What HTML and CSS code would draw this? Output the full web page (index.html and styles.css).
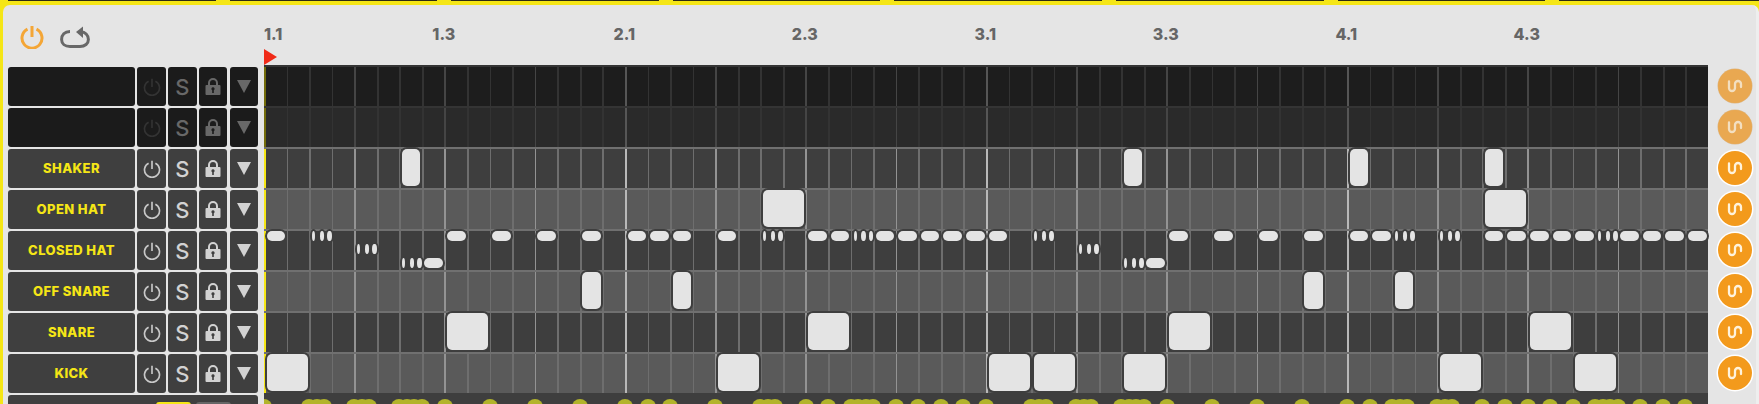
FILE: index.html
```html
<!DOCTYPE html>
<html lang="en">
<head>
    <meta charset="UTF-8">
    <meta name="viewport" content="width=device-width, initial-scale=1.0">
    <title>Sequencer</title>
    <link rel="stylesheet" href="styles.css">
</head>
<body>
    <svg class="defs" width="0" height="0">
        <symbol id="power" viewBox="0 0 24 24">
            <path class="power-path" d="M7.5 4.2a10 10 0 1 0 9 0M12 1v11" fill="none" stroke="currentColor"/>
        </symbol>
        <symbol id="lock" viewBox="0 0 16 17">
            <path d="M4 7V5a4 4 0 0 1 8 0v2" fill="none" stroke="currentColor" stroke-width="2"/>
            <path fill-rule="evenodd" fill="currentColor" d="M1.5 7h13a1 1 0 0 1 1 1v8a1 1 0 0 1-1 1h-13a1 1 0 0 1-1-1V8a1 1 0 0 1 1-1zM8 9.2a1.6 1.6 0 0 0-.8 3V15h1.6v-2.8a1.6 1.6 0 0 0-.8-3z"/>
        </symbol>
        <symbol id="squiggle" viewBox="0 0 18 18">
            <path d="M3 4.5v6.5a3 3 0 0 0 6 0V7a3 3 0 0 1 6 0v3" fill="none" stroke="currentColor" stroke-width="2.3" stroke-linecap="round"/>
        </symbol>
    </svg>

    <div class="tabs">
        <span></span><span></span><span></span><span></span><span></span><span></span><span></span><span></span>
    </div>

    <div class="panel">
        <div class="header">
            <div class="transport">
                <svg class="main-power"><use href="#power"/></svg>
                <svg class="loop" viewBox="0 0 30 22">
                    <path d="M10 5.500C4.500 5.500 1.600 9 1.600 13.500S5 20.500 10 20.500H20C25 20.500 28.400 17.500 28.400 13.500 28.400 9 25 5.800 21 5.800" fill="none" stroke="currentColor" stroke-width="3"/>
                    <path d="M16 6 23 .5V12z" fill="currentColor"/>
                </svg>
            </div>
            <div class="ruler">
                <span class="first">1.1</span><span>1.3</span><span>2.1</span><span>2.3</span><span>3.1</span><span>3.3</span><span>4.1</span><span>4.3</span>
                <i class="marker"></i>
            </div>
        </div>
        <div class="main">
            <div class="tracks" id="tracks"></div>
            <div class="grid">
                <div id="lanes"></div>
                <div class="velocity" id="velocity"></div>
            </div>
            <div class="knobs" id="knobs"></div>
        </div>
    </div>

    <script src="script.js"></script>
</body>
</html>
```

FILE: styles.css
```css
body {
    margin: 0;
    height: 404px;
    overflow: hidden;
    background-color: #f5e616;
    font-family: Inter, "Liberation Sans", sans-serif;
}
.defs {
    position: absolute;
}
.tabs {
    display: flex;
    gap: 14px;
    height: 1px;
    padding-left: 8px;
    margin-bottom: 4px;
}
.tabs span {
    flex: 0 0 207.600px;
    background-color: #2e2c12;
}
.panel {
    margin-left: 3px;
    height: 399px;
    overflow: hidden;
    padding-left: 5px;
    box-sizing: border-box;
    background-color: #e5e5e5;
    border-right: 3px solid #eeeeee;
    border-radius: 7px 7px 0 0;
}

.header {
    display: flex;
    height: 60px;
}
.transport {
    display: flex;
    flex: 0 0 256px;
    align-items: flex-start;
    gap: 16px;
    padding: 20px 0 0 12px;
    box-sizing: border-box;
}
.power-path {
    stroke-width: var(--power-stroke, 2.2);
}
.main-power {
    --power-stroke: 3;
    width: 24px;
    height: 24px;
    color: #f4a636;
}
.loop {
    width: 30px;
    height: 22px;
    margin-top: 1px;
    color: #686868;
}
.ruler {
    position: relative;
    display: grid;
    grid-template-columns: 89.500px repeat(7, 180.500px);
    padding-top: 19px;
    height: 41px;
    font-size: 16px;
    font-weight: 800;
    color: #666666;
    text-align: center;
}
.ruler .first {
    text-align: left;
}
.marker {
    position: absolute;
    left: 0;
    bottom: 0;
    width: 13px;
    height: 16px;
    background-color: #f02a17;
    clip-path: polygon(0 0, 100% 50%, 0 100%);
}

.main {
    display: flex;
}
.tracks {
    flex: 0 0 250px;
    margin: 2px 6px 0 0;
}
.track {
    display: grid;
    grid-template-columns: 127px repeat(4, 28.500px);
    gap: 2.250px;
    height: 39px;
    margin-bottom: 2px;
    color: #d2d2d2;
    --cell: #3f3f3f;
    --off: #c8c8c8;
}
.track.muted {
    color: #686868;
    --cell: #1b1b1b;
    --off: #333333;
}
.track > div {
    display: flex;
    align-items: center;
    justify-content: center;
    background-color: var(--cell);
    border-radius: 3px;
}
.track > .name {
    padding-bottom: 2px;
    box-sizing: border-box;
    font-size: 13px;
    font-weight: 800;
    letter-spacing: 0.4px;
    color: #f5e616;
}
.btn-power {
    width: 18px;
    height: 18px;
    color: var(--off);
}
.btn-solo {
    font-size: 22px;
    font-weight: 500;
}
.btn-lock {
    width: 16px;
    height: 17px;
}
.btn-menu {
    width: 0;
    height: 0;
    border-left: 7.500px solid transparent;
    border-right: 7.500px solid transparent;
    border-top: 13px solid currentColor;
}
.extra {
    display: flex;
    justify-content: flex-end;
    gap: 5px;
    height: 20px;
    padding: 7px 27px 0 0;
    box-sizing: border-box;
    background-color: #3f3f3f;
    border-radius: 3px;
}
.extra span {
    width: 35px;
    background-color: #666666;
    border-radius: 3px;
}
.extra .on {
    background-color: #f5e616;
}

.grid {
    flex: 0 0 1444px;
}
.lane {
    position: relative;
    height: 39px;
    border-top: 2px solid #707070;
    background-color: #3e3e3e;
    background-image:
        linear-gradient(#f5e616, #f5e616),
        repeating-linear-gradient(to right, #b8b8b8 0 1.700px, transparent 1.700px 361px),
        repeating-linear-gradient(to right, #939393 0 1.700px, transparent 1.700px 90.250px),
        repeating-linear-gradient(to right, #6e6e6e 0 1.700px, transparent 1.700px 22.5625px);
    background-size: 2px 100%, auto, auto, auto;
    background-repeat: no-repeat, repeat, repeat, repeat;
}
.lane.light {
    background-color: #5a5a5a;
}
.lane.muted::after {
    content: "";
    position: absolute;
    left: 0;
    right: 0;
    top: -2px;
    bottom: 0;
    background-color: rgba(0, 0, 0, 0.53);
}
.note {
    position: absolute;
    top: 0;
    height: 37px;
    background-color: #e4e4e4;
    border-radius: 5px;
    box-shadow: 0 0 0 2px #3e3e3e;
}
.note.hat {
    height: 9.500px;
    border-radius: 5px;
}
.note.tick {
    height: 10px;
    border-radius: 50%;
}
.velocity {
    position: relative;
    height: 11px;
    overflow: hidden;
    background-color: #3e3e3e;
}
.velocity i {
    position: absolute;
    top: 6px;
    width: 16px;
    height: 16px;
    margin-left: -8px;
    background-color: #b2b42b;
    border-radius: 50%;
}

.knobs {
    display: flex;
    flex-direction: column;
    gap: 7px;
    padding: 4px 0 0 10px;
}
.knob {
    display: flex;
    align-items: center;
    justify-content: center;
    width: 34px;
    height: 34px;
    background-color: #f39a1c;
    border-radius: 50%;
    box-shadow: 0 0 0 1.500px #ffffff;
    color: #fff3dc;
}
.knob.muted {
    background-color: #e9a851;
    box-shadow: 0 0 0 0.500px #dcb98a;
    color: #f3dfc0;
}
.knob svg {
    width: 18px;
    height: 18px;
}
```

FILE: script.js
```js
const COL = 22.5625;

// name, muted, notes as [column, length in columns]
const pistas = [
    { name: '', muted: true, notes: [] },
    { name: '', muted: true, light: true, notes: [] },
    { name: 'SHAKER', notes: [[6, 1], [38, 1], [48, 1], [54, 1]] },
    { name: 'OPEN HAT', light: true, notes: [[22, 2], [54, 2]] },
    { name: 'CLOSED HAT', hats: true, notes: [] },
    { name: 'OFF SNARE', light: true, notes: [[14, 1], [18, 1], [46, 1], [50, 1]] },
    { name: 'SNARE', notes: [[8, 2], [24, 2], [40, 2], [56, 2]] },
    { name: 'KICK', light: true, notes: [[0, 2], [20, 2], [32, 2], [34, 2], [38, 2], [52, 2], [58, 2]] }
];

// closed hat: [column, lane offset]; triplets are kept apart
const hats = [
    [0, 0], [8, 0], [10, 0], [12, 0], [14, 0], [16, 0], [17, 0], [18, 0], [20, 0], [24, 0], [25, 0],
    [27, 0], [28, 0], [29, 0], [30, 0], [31, 0], [32, 0], [40, 0], [42, 0], [44, 0], [46, 0], [48, 0],
    [49, 0], [54, 0], [55, 0], [56, 0], [57, 0], [58, 0], [60, 0], [61, 0], [62, 0], [63, 0],
    [7, 2], [39, 2]
];
const triplets = [
    [2, 0], [22, 0], [26, 0], [34, 0], [50, 0], [52, 0], [59, 0],
    [4, 1], [36, 1],
    [6, 2], [38, 2]
];
const laneTop = [0, 13, 27];

const tracks = document.getElementById('tracks');
const lanes = document.getElementById('lanes');
const velocity = document.getElementById('velocity');
const knobs = document.getElementById('knobs');

function addNote(lane, className, left, top, width) {
    const note = document.createElement('i');
    note.className = className;
    note.style.left = left + 'px';
    if (top !== null) note.style.top = top + 'px';
    note.style.width = width + 'px';
    lane.appendChild(note);
}

function addDot(left) {
    const dot = document.createElement('i');
    dot.style.left = left + 'px';
    velocity.appendChild(dot);
}

pistas.forEach(pista => {
    const muted = pista.muted ? ' muted' : '';
    tracks.insertAdjacentHTML('beforeend', `
        <div class="track${muted}">
            <div class="name">${pista.name}</div>
            <div><svg class="btn-power"><use href="#power"/></svg></div>
            <div class="btn-solo">S</div>
            <div><svg class="btn-lock"><use href="#lock"/></svg></div>
            <div><span class="btn-menu"></span></div>
        </div>`);

    const lane = document.createElement('div');
    lane.className = 'lane' + (pista.light ? ' light' : '') + muted;
    pista.notes.forEach(([col, len]) => {
        addNote(lane, 'note', col * COL + 2.5, null, len * COL - 4);
    });
    if (pista.hats) {
        hats.forEach(([col, n]) => {
            addNote(lane, 'note hat', col * COL + 2.5, laneTop[n], COL - 4);
            addDot(col * COL);
        });
        triplets.forEach(([col, n]) => {
            for (let i = 0; i < 3; i++) {
                // the first tick of a triplet is narrower than the other two
                const width = i === 0 ? 3 : 4.5;
                addNote(lane, 'note tick', col * COL + 3 + i * COL / 3, laneTop[n] - 0.5, width);
                addDot(col * COL + i * COL / 3);
            }
        });
    }
    lanes.appendChild(lane);

    knobs.insertAdjacentHTML('beforeend',
        `<div class="knob${muted}"><svg><use href="#squiggle"/></svg></div>`);
});

tracks.insertAdjacentHTML('beforeend', '<div class="extra"><span class="on"></span><span></span></div>');
```
